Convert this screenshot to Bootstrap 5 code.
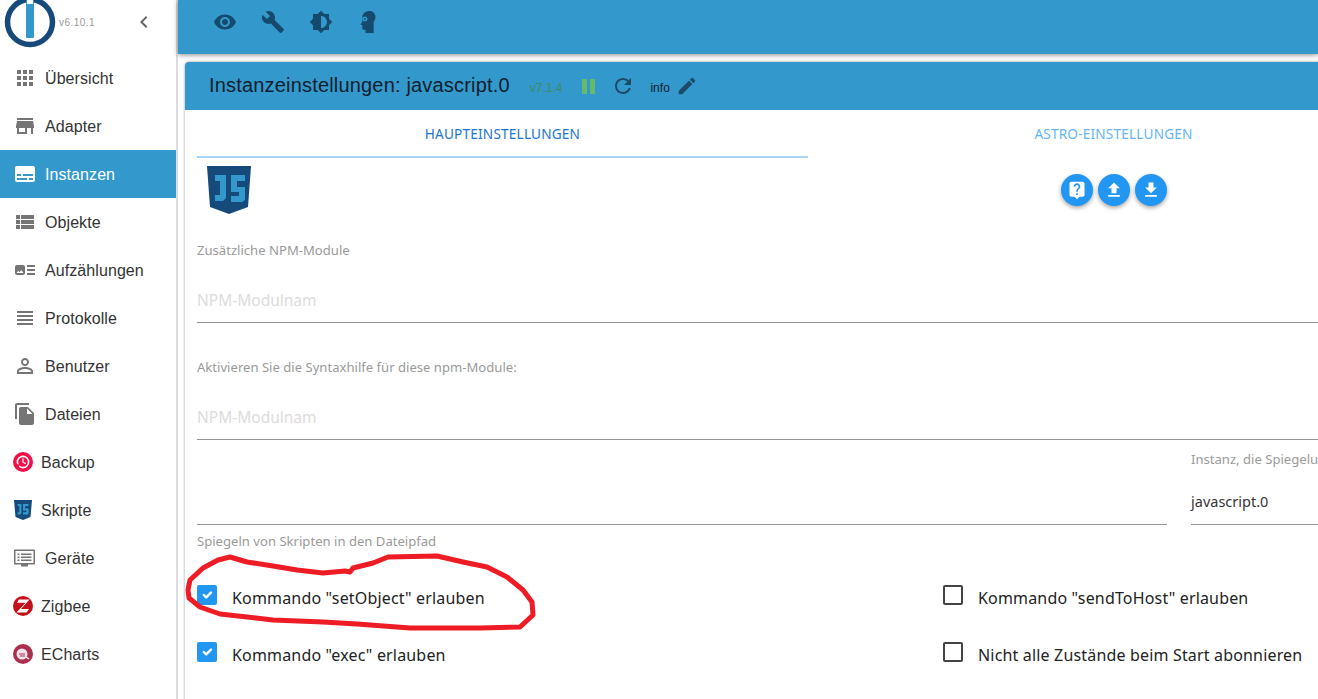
<!DOCTYPE html>
<html lang="de">
<head>
<meta charset="utf-8">
<title>Instanzeinstellungen</title>
<link href="https://cdn.jsdelivr.net/npm/bootstrap@5.3.0/dist/css/bootstrap.min.css" rel="stylesheet">
<style>
html,body{height:699px;overflow:hidden;background:#fff;}
body{font-family:"Liberation Sans",Arial,sans-serif;color:#222;position:relative;width:1318px;}
svg{display:block;fill:currentColor;}
.shell{height:699px;}
.side{width:178px;flex:none;border-right:2px solid #ddd;background:#fff;}
.side-top{height:54px;}
.ver{font-size:10px;color:#999;letter-spacing:.45px;margin-left:-1px;margin-top:-9px;}
.back{color:#666;margin-left:37px;margin-top:-10px;}
.mitem{height:48px;font-size:16px;color:#333;padding-left:13px;}
.mitem svg{color:#757575;flex:none;}
.mitem .lab{margin-left:8px;padding-top:2px;letter-spacing:.08px;}
.mitem.sel{background:#3399cc;color:#fff;}
.mitem.sel svg{color:#fff;}
.mainp{flex:1;min-width:0;}
.topb{height:54px;background:#3399cc;padding-left:35px;gap:24px;color:#164a6d;box-shadow:0 1px 5px rgba(0,0,0,.45);position:relative;}
.topb svg{margin-top:-10px;}
.topb .headico{margin-left:-1px;}
.panel{margin:8px 0 0 7px;width:1300px;height:640px;box-shadow:0 0 3px rgba(0,0,0,.4);border-radius:4px 0 0 0;background:#fff;}
.phead{height:48px;background:#3399cc;border-radius:4px 0 0 0;padding-left:24px;color:#10202c;}
.ptitle{font-size:20px;margin-right:20px;letter-spacing:.18px;margin-top:-2px;}
.pver{font-size:12px;color:#3d8d5c;margin-right:20px;margin-top:3px;}
.pbars{gap:3px;margin-right:16px;}
.pbars i{display:block;width:5px;height:15px;background:#66bb6a;}
.pinfo{font-size:12px;margin:3px 6px 0 15px;}
.phead svg{color:#1d4a68;}
.pbody{padding:0 0 0 12px;width:1235px;font-family:"Noto Sans","Open Sans",sans-serif;position:relative;}
.tabs{height:48px;}
.tabx{width:611px;font-size:13.6px;letter-spacing:.2px;color:#64b5f6;padding-top:14px;text-align:center;height:48px;text-transform:uppercase;}
.tabx.on{color:#1976d2;border-bottom:2px solid #a9d5f8;}
.jslogo{margin:8px 0 0 10px;}
.fabs{position:absolute;top:64px;left:876px;gap:5px;}
.fabb{width:32px;height:32px;border:0;padding:0;border-radius:50%;background:#2196f3;color:#fff;box-shadow:0 2px 4px rgba(0,0,0,.35);}
.flab{font-size:13.1px;color:#9a9a9a;line-height:16px;}
.flab1{margin-top:28px;}
.flab2{margin-top:36px;}
.fph{height:65px;font-size:15.5px;color:#dcdcdc;border-bottom:1px solid #949494;padding-top:31px;line-height:22px;}
.mirror{gap:24px;height:85px;}
.mleft{width:970px;border-bottom:1px solid #949494;}
.mright{width:180px;border-bottom:1px solid #949494;padding-top:11px;white-space:nowrap;overflow:visible;}
.mval{font-size:14.5px;color:#333;margin-top:24px;line-height:20px;}
.flab3{margin-top:8px;}
.chkgrid{margin-top:36px;}
.chkrow{height:57px;}
.chkcell{width:746px;flex:none;}
.chkcell .form-check-input{width:20px;height:20px;margin:0 15px 0 0;border-radius:2px;border:2px solid #444;flex:none;}
.chkcell .form-check-input:checked{background-color:#2196f3;border-color:#2196f3;}
.chkcell label{font-size:16px;color:#222;letter-spacing:.17px;line-height:20px;margin-top:3px;}
.scrawl{position:absolute;left:0;top:0;pointer-events:none;}
</style>
</head>
<body>
<div class="d-flex shell">
  <nav class="side d-flex flex-column">
    <div class="side-top d-flex align-items-center">
      <svg width="56" height="54" viewBox="0 0 56 54" class="ms-1">
        <circle cx="26" cy="22" r="22.5" fill="none" stroke="#164a7a" stroke-width="5.5"/>
        <rect x="22" y="0" width="8" height="38" rx="1" fill="#3399cc"/>
        <rect x="23" y="0" width="6" height="4" fill="#fff"/>
      </svg>
      <span class="ver">v6.10.1</span>
      <svg class="back" width="24" height="24" viewBox="0 0 24 24"><path d="M15.41 7.41L14 6l-6 6 6 6 1.41-1.41L10.83 12z"/></svg>
    </div>
    <div class="mitem d-flex align-items-center"><svg width="24" height="24" viewBox="0 0 24 24"><path d="M4 8h4V4H4v4zm6 12h4v-4h-4v4zm-6 0h4v-4H4v4zm0-6h4v-4H4v4zm6 0h4v-4h-4v4zm6-10v4h4V4h-4zm-6 4h4V4h-4v4zm6 6h4v-4h-4v4zm0 6h4v-4h-4v4z"/></svg><span class="lab">Übersicht</span></div>
    <div class="mitem d-flex align-items-center"><svg width="24" height="24" viewBox="0 0 24 24"><path d="M20 4H4v2h16V4zm1 10v-2l-1-5H4l-1 5v2h1v6h10v-6h4v6h2v-6h1zm-9 4H6v-4h6v4z"/></svg><span class="lab">Adapter</span></div>
    <div class="mitem sel d-flex align-items-center"><svg width="24" height="24" viewBox="0 0 24 24"><path d="M20 4H4c-1.1 0-2 .9-2 2v12c0 1.1.9 2 2 2h16c1.1 0 2-.9 2-2V6c0-1.1-.9-2-2-2zM4 12h4v2H4v-2zm10 6H4v-2h10v2zm6 0h-4v-2h4v2zm0-4H10v-2h10v2z"/></svg><span class="lab">Instanzen</span></div>
    <div class="mitem d-flex align-items-center"><svg width="24" height="24" viewBox="0 0 24 24"><path d="M3 14h4v-4H3v4zm0 5h4v-4H3v4zM3 9h4V5H3v4zm5 5h13v-4H8v4zm0 5h13v-4H8v4zM8 5v4h13V5H8z"/></svg><span class="lab">Objekte</span></div>
    <div class="mitem d-flex align-items-center"><svg width="24" height="24" viewBox="0 0 24 24"><path d="M22 13h-8v-2h8v2zm0-6h-8v2h8V7zm-8 10h8v-2h-8v2zm-2-8v6c0 1.1-.9 2-2 2H4c-1.1 0-2-.9-2-2V9c0-1.1.9-2 2-2h6c1.1 0 2 .9 2 2zm-1.5 6l-2.25-3-1.75 2.26-1.25-1.51L3.5 15h7z"/></svg><span class="lab">Aufzählungen</span></div>
    <div class="mitem d-flex align-items-center"><svg width="24" height="24" viewBox="0 0 24 24"><path d="M4 15h16v-2H4v2zm0 4h16v-2H4v2zm0-8h16V9H4v2zm0-6v2h16V5H4z"/></svg><span class="lab">Protokolle</span></div>
    <div class="mitem d-flex align-items-center"><svg width="24" height="24" viewBox="0 0 24 24"><path d="M12 5.9c1.16 0 2.1.94 2.1 2.1s-.94 2.1-2.1 2.1S9.9 9.16 9.9 8s.94-2.1 2.1-2.1m0 9c2.97 0 6.1 1.46 6.1 2.1v1.1H5.9V17c0-.64 3.13-2.1 6.1-2.1M12 4C9.79 4 8 5.79 8 8s1.79 4 4 4 4-1.79 4-4-1.79-4-4-4zm0 9c-2.67 0-8 1.34-8 4v3h16v-3c0-2.66-5.33-4-8-4z"/></svg><span class="lab">Benutzer</span></div>
    <div class="mitem d-flex align-items-center"><svg width="24" height="24" viewBox="0 0 24 24"><path d="M16 1H4c-1.1 0-2 .9-2 2v14h2V3h12V1zm-1 4l6 6v10c0 1.1-.9 2-2 2H7.99C6.89 23 6 22.1 6 21l.01-14c0-1.1.89-2 1.99-2h7zm-1 7h5.5L14 6.5V12z"/></svg><span class="lab">Dateien</span></div>
    <div class="mitem d-flex align-items-center"><svg width="20" height="20" viewBox="0 0 20 20"><circle cx="10" cy="10" r="10" fill="#f50f47"/><circle cx="10" cy="10" r="5.6" fill="none" stroke="#fff" stroke-width="1.6"/><path d="M10 6.6v3.6l2.6 1.4" fill="none" stroke="#fff" stroke-width="1.3"/><path d="M2.6 12.2h5l-2.4 3z" fill="#f50f47"/></svg><span class="lab">Backup</span></div>
    <div class="mitem d-flex align-items-center"><svg width="20" height="20" viewBox="0 0 20 20"><path d="M1 0h18l-1.500 17L10 20l-7.500-3z" fill="#164a7a"/><path d="M8.400 4v9l-1 1.400H4.600v-2.200h1.700V6.100H4.600V4zM10 4h5.600v2.100h-3.500v2.400h3.500v4.900l-1 1h-4.600v-2.100h3.500V10.600H10z" fill="#3399cc"/></svg><span class="lab">Skripte</span></div>
    <div class="mitem d-flex align-items-center"><svg width="24" height="24" viewBox="0 0 24 24"><path fill-rule="evenodd" d="M2 3.500h19c.6 0 1 .4 1 1v13c0 .6-.4 1-1 1h-6v2H8v-2H2c-.6 0-1-.4-1-1v-13c0-.6.4-1 1-1zm.500 1.500v12h18V5z"/><path d="M4.500 7.500h2V9h-2zm3.500 0h10.500V9H8zM4.500 10.500h2V12h-2zm3.500 0h10.500V12H8zM4.500 13.500h2V15h-2zm3.500 0h10.500V15H8z"/></svg><span class="lab">Geräte</span></div>
    <div class="mitem d-flex align-items-center"><svg width="20" height="20" viewBox="0 0 20 20"><circle cx="10" cy="10" r="10" fill="#c4101a"/><path d="M6 3.400h10.500L8 13h8l-2.500 3.600H3.500L12.500 6.800H4z" fill="#fff"/></svg><span class="lab">Zigbee</span></div>
    <div class="mitem d-flex align-items-center"><svg width="20" height="20" viewBox="0 0 20 20"><circle cx="10" cy="10" r="10" fill="#ad2f4e"/><circle cx="9" cy="10" r="5.500" fill="#f3e4e8"/><path d="M6 10h6M7 12h5" stroke="#ad2f4e" stroke-width="1" fill="none"/><path d="M13 13l3 2" stroke="#fff" stroke-width="1.200"/></svg><span class="lab">ECharts</span></div>
  </nav>
  <main class="mainp">
    <div class="topb d-flex align-items-center">
      <svg width="24" height="24" viewBox="0 0 24 24"><path d="M12 4.500C7 4.500 2.730 7.610 1 12c1.730 4.390 6 7.500 11 7.500s9.270-3.110 11-7.500c-1.730-4.390-6-7.500-11-7.500zM12 17c-2.760 0-5-2.240-5-5s2.240-5 5-5 5 2.240 5 5-2.240 5-5 5zm0-8c-1.660 0-3 1.340-3 3s1.340 3 3 3 3-1.340 3-3-1.340-3-3-3z"/></svg>
      <svg width="24" height="24" viewBox="0 0 24 24"><path d="M22.700 19l-9.100-9.100c.9-2.300.4-5-1.500-6.900-2-2-5-2.400-7.400-1.300L9 6 6 9 1.600 4.700C.4 7.100.9 10.100 2.900 12.100c1.900 1.900 4.600 2.400 6.900 1.500l9.100 9.100c.4.400 1 .4 1.400 0l2.300-2.300c.5-.4.5-1.100.1-1.400z"/></svg>
      <svg width="24" height="24" viewBox="0 0 24 24"><path d="M20 15.310L23.310 12 20 8.690V4h-4.690L12 .69 8.690 4H4v4.690L.69 12 4 15.310V20h4.690L12 23.310 15.310 20H20v-4.690zM12 18V6c3.310 0 6 2.690 6 6s-2.690 6-6 6z"/></svg>
      <svg class="headico" width="24" height="24" viewBox="0 0 24 24"><path fill-rule="evenodd" d="M13.500 1c3.600 0 6 2.700 6 6 0 2.300-1 3.600-1.800 4.700V23H9.500v-3.300H7.300c-.6 0-1-.5-1-1V15H5.200c-.4 0-.6-.4-.4-.7l1.500-2.600V7.500C6.300 3.500 9.500 1 13.500 1zM9 6.500a2.500 2.500 0 1 0 0 5 2.500 2.500 0 0 0 0-5zm0 1.600a.9.900 0 1 1 0 1.800.9.900 0 0 1 0-1.800z"/></svg>
    </div>
    <section class="panel">
      <header class="phead d-flex align-items-center">
        <span class="ptitle">Instanzeinstellungen: javascript.0</span>
        <span class="pver">v7.1.4</span>
        <span class="pbars d-flex"><i></i><i></i></span>
        <svg width="24" height="24" viewBox="0 0 24 24"><path d="M17.650 6.350C16.200 4.900 14.210 4 12 4c-4.420 0-7.990 3.580-7.990 8s3.570 8 7.990 8c3.730 0 6.840-2.550 7.730-6h-2.080c-.82 2.330-3.040 4-5.650 4-3.310 0-6-2.690-6-6s2.690-6 6-6c1.660 0 3.140.69 4.220 1.780L13 11h7V4l-2.350 2.350z"/></svg>
        <span class="pinfo">info</span>
        <svg width="22" height="22" viewBox="0 0 24 24"><path d="M3 17.250V21h3.750L17.810 9.940l-3.750-3.750L3 17.250zM20.710 7.040c.39-.39.39-1.020 0-1.410l-2.340-2.340c-.39-.39-1.020-.39-1.410 0l-1.830 1.830 3.750 3.750 1.830-1.830z"/></svg>
      </header>
      <div class="pbody">
        <div class="tabs d-flex">
          <div class="tabx on">Haupteinstellungen</div>
          <div class="tabx">Astro-Einstellungen</div>
        </div>
        <svg class="jslogo" width="44" height="48" viewBox="0 0 44 48"><path d="M0 0h44l-3 41-19 7-19-7z" fill="#164a7a"/><path d="M19 9v23l-3 3H8v-6h5V15H8V9zM24 9h14v6H30v6h8v13l-3 2H24v-6h8v-4h-8z" fill="#3399cc"/></svg>
        <div class="fabs d-flex">
          <button type="button" class="fabb d-flex align-items-center justify-content-center" aria-label="Hilfe"><svg width="20" height="20" viewBox="0 0 24 24"><path d="M19 2H5c-1.110 0-2 .9-2 2v14c0 1.100.89 2 2 2h4l3 3 3-3h4c1.100 0 2-.9 2-2V4c0-1.100-.9-2-2-2zm-6 16h-2v-2h2v2zm2.070-7.750l-.9.92C13.450 11.900 13 12.500 13 14h-2v-.5c0-1.100.45-2.100 1.170-2.830l1.240-1.260c.37-.36.59-.86.59-1.410 0-1.100-.9-2-2-2s-2 .9-2 2H8c0-2.210 1.790-4 4-4s4 1.790 4 4c0 .88-.36 1.680-.93 2.250z"/></svg></button>
          <button type="button" class="fabb d-flex align-items-center justify-content-center" aria-label="Hochladen"><svg width="20" height="20" viewBox="0 0 24 24"><path d="M9 16h6v-6h4l-7-7-7 7h4zm-4 2h14v2H5z"/></svg></button>
          <button type="button" class="fabb d-flex align-items-center justify-content-center" aria-label="Herunterladen"><svg width="20" height="20" viewBox="0 0 24 24"><path d="M19 9h-4V3H9v6H5l7 7 7-7zM5 18v2h14v-2H5z"/></svg></button>
        </div>
        <div class="flab flab1">Zusätzliche NPM-Module</div>
        <div class="fph">NPM-Modulnam</div>
        <div class="flab flab2">Aktivieren Sie die Syntaxhilfe für diese npm-Module:</div>
        <div class="fph">NPM-Modulnam</div>
        <div class="mirror d-flex">
          <div class="mleft"></div>
          <div class="mright"><div class="flab">Instanz, die Spiegelung ausführt</div><div class="mval">javascript.0</div></div>
        </div>
        <div class="flab flab3">Spiegeln von Skripten in den Dateipfad</div>
        <div class="chkgrid">
          <div class="chkrow d-flex">
            <div class="chkcell d-flex"><input class="form-check-input" type="checkbox" id="c1" checked><label for="c1">Kommando "setObject" erlauben</label></div>
            <div class="chkcell d-flex"><input class="form-check-input" type="checkbox" id="c2"><label for="c2">Kommando "sendToHost" erlauben</label></div>
          </div>
          <div class="chkrow d-flex">
            <div class="chkcell d-flex"><input class="form-check-input" type="checkbox" id="c3" checked><label for="c3">Kommando "exec" erlauben</label></div>
            <div class="chkcell d-flex"><input class="form-check-input" type="checkbox" id="c4"><label for="c4">Nicht alle Zustände beim Start abonnieren</label></div>
          </div>
        </div>
      </div>
    </section>
  </main>
</div>
<svg class="scrawl" width="1318" height="699" viewBox="0 0 1318 699"><path d="M189 598L188 590L190 580L203 568L218 560L230 557L247 562L273 566L297 570L323 573L345 571L350 572L353 568L373 563L388 557L437 556L463 562L487 567L507 577L523 590L532 602L533 615L520 627L480 628L410 628L357 624L323 622L273 620L220 614L200 607Z" fill="none" stroke="#ee1c25" stroke-width="5" stroke-linejoin="round"/></svg>
<script src="https://cdn.jsdelivr.net/npm/bootstrap@5.3.0/dist/js/bootstrap.bundle.min.js"></script>
</body>
</html>
